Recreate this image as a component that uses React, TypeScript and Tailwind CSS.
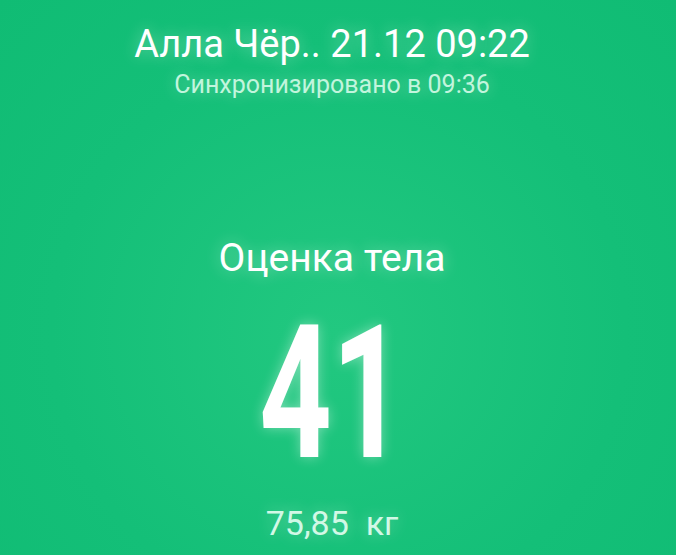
export default function App() {
  const glow = '[text-shadow:0_0_16px_rgba(255,255,255,0.4)]';
  return (
    <div className="w-[676px] h-[555px] overflow-hidden pr-[12px] bg-[#14bf78] bg-[radial-gradient(ellipse_at_50%_60%,#22c880_0%,#14bf78_60%,#10bc74_100%)] font-['Roboto',sans-serif] text-white flex flex-col items-center">
      <div className={`mt-[22px] text-[38px] leading-[44px] ${glow}`}>Алла Чёр.. 21.12 09:22</div>
      <div className={`mt-[4px] text-[25px] leading-[30px] text-[#c2f5dd] ${glow}`}>Синхронизировано в 09:36</div>
      <div className={`mt-[135px] text-[39px] leading-[46px] ${glow}`}>Оценка тела</div>
      <div className={`mt-[32px] text-[186px] leading-[160px] font-bold scale-x-[0.68] ${glow}`}>41</div>
      <div className={`mt-[30px] text-[34px] leading-[40px] text-[#d2f8e6] ${glow}`}>75,85&nbsp; кг</div>
    </div>
  );
}
